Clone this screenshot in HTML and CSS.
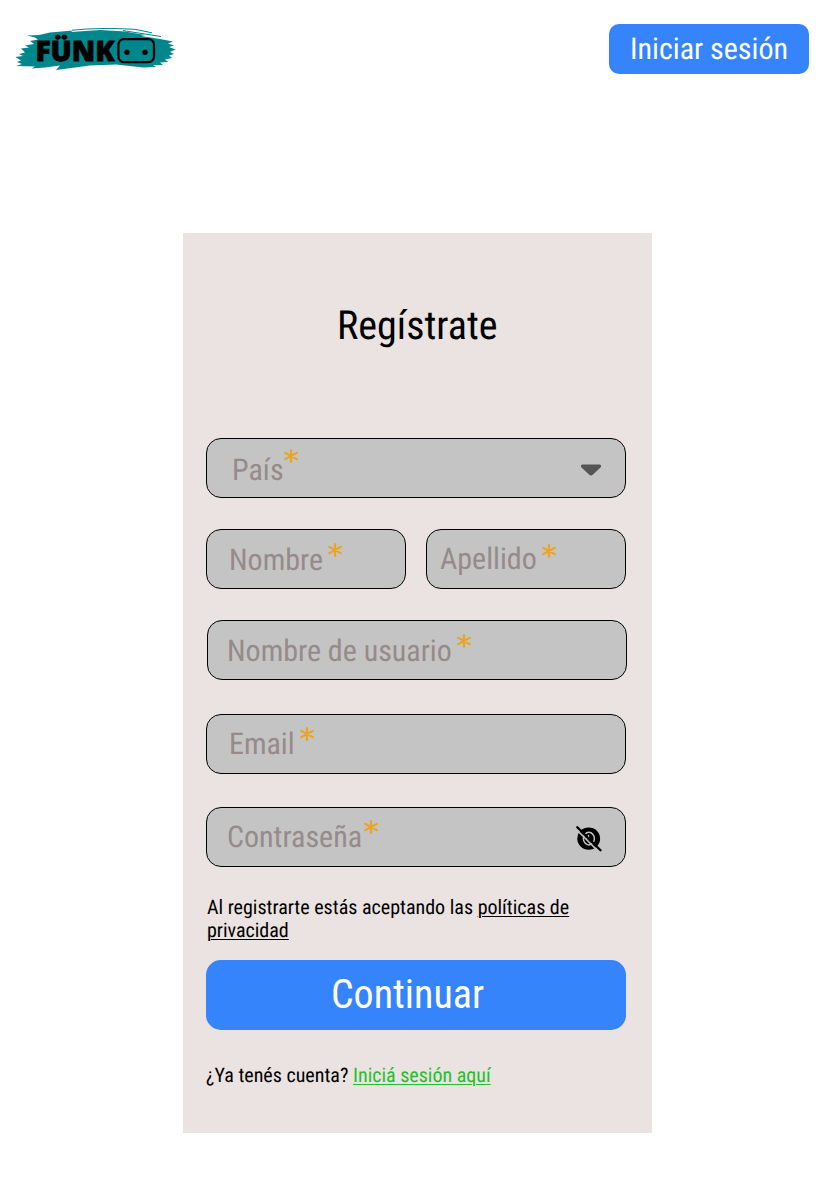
FILE: index.html
```html
<!DOCTYPE html>
<html lang="es">
<head>
<meta charset="utf-8">
<title>Regístrate</title>
<link rel="stylesheet" href="styles.css">
</head>
<body>
<svg width="0" height="0" class="defs"><symbol id="star" viewBox="0 0 14 14"><path d="M7 1.200V12.800M1.300 3.900L12.700 10.100M1.300 10.100L12.700 3.900"/></symbol></svg>
<header class="topbar">
  <svg class="logo" viewBox="0 0 162 46" role="img" aria-label="FÜNK">
    <path class="brush" d="M12 8.500L24 8 35 5.500 58 3.500 56 5 85 3 110 4.500 130 8 126 9 145 12 158 14.500 153 16.500 159 18.500 154 20 160.500 22.500 155 25 159 27 154 28.500 157 31 150 32.500 153 35 145 35.500 148 38 138 38 141 40 128 40.500 101 37.500 75 38.500 45 42.500 41 43 45 38.500 30 40.500 17 41.500 20 39.500 1 39 7 37 2 35 6 33.500 0.500 30 8 29 4 27 10 25.500 6 21.500 14 20.500 10 18.500 19 17 15 14 23 12.500 20 10.500Z"/>
    <path class="streaks" d="M57 3.200Q85 .3 120 2.300L137 5.800M108 3.600L146 9.500"/>
    <text class="logo-text" x="20.500" y="34" textLength="79" lengthAdjust="spacingAndGlyphs">FÜNK</text>
    <rect class="pad" x="103.400" y="12.200" width="35.600" height="22.900" rx="5.500"/>
    <circle cx="112" cy="25.300" r="2.700"/><circle cx="130" cy="25.300" r="2.700"/>
  </svg>
  <a class="login">Iniciar sesión</a>
</header>
<main class="card">
  <h1 class="title">Regístrate</h1>
  <div class="field country"><span>País</span><svg class="star"><use href="#star"/></svg>
    <svg class="arrow" viewBox="0 0 22 12"><path d="M2 .5H20Q22 1.500 20.500 3.500L13 10.500Q11 12.500 9 10.500L1.500 3.500Q0 1.500 2 .5Z"/></svg></div>
  <div class="names">
    <div class="field first"><span>Nombre</span><svg class="star"><use href="#star"/></svg></div>
    <div class="field last"><span>Apellido</span><svg class="star"><use href="#star"/></svg></div>
  </div>
  <div class="field user"><span>Nombre de usuario</span><svg class="star"><use href="#star"/></svg></div>
  <div class="field email"><span>Email</span><svg class="star"><use href="#star"/></svg></div>
  <div class="field password"><span>Contraseña</span><svg class="star"><use href="#star"/></svg>
    <svg class="eye" viewBox="0 0 26 26"><ellipse cx="12.700" cy="12.600" rx="11.400" ry="11.200"/><ellipse class="iris" cx="12.900" cy="12.600" rx="5.500" ry="6.300"/><path class="glint" d="M12.500 9.500Q12.800 11.500 11 12"/><path class="gap" d="M.5 3.500L22.500 25.500"/><path class="slash" d="M1.300 1.300L24.500 24.300"/></svg></div>
  <p class="terms">Al registrarte estás aceptando las <u>políticas de</u> <u>privacidad</u></p>
  <button class="submit">Continuar</button>
  <p class="account">¿Ya tenés cuenta? <a>Iniciá sesión aquí</a></p>
</main>
</body>
</html>
```
FILE: styles.css
```css
* { box-sizing: border-box; }
body { margin: 0; background: #fff; font-family: "Roboto Condensed", Roboto, sans-serif; font-stretch: condensed; color: #000; text-rendering: geometricPrecision; }
.defs { position: absolute; }
.topbar { display: flex; justify-content: space-between; padding: 24px 25px 0 15px; height: 233px; }
.logo { width: 162px; height: 46px; margin-top: 3px; }
.brush { fill: #00868b; }
.streaks { fill: none; stroke: #00868b; stroke-width: 1px; }
.logo-text { font: 800 28px "Open Sans", sans-serif; stroke: #000; stroke-width: 0.8px; }
.pad { fill: none; stroke: #000; stroke-width: 2.2px; }
.login { width: 200px; height: 50px; border-radius: 10px; background: #3584fc; color: #fff; font-size: 30px; line-height: 52px; text-align: center; }
.card { width: 469px; height: 900px; margin-left: 183px; padding: 69px 26px 0 23px; background: #ebe3e1; }
.title { margin: 0 0 89px; padding-left: 2.6px; font-size: 40px; line-height: 47px; font-weight: 400; text-align: center; }
.field { display: flex; width: 420px; height: 60px; padding-left: 22px; border: 1px solid #000; border-radius: 15px; background: #c4c4c4; color: #968a8a; font-size: 30px; line-height: 60px; }
.star { flex: none; width: 14px; height: 14px; margin: 12.5px 0 0 4.9px; fill: none; stroke: #e9a421; stroke-width: 2.2px; stroke-linecap: round; }
.country { padding-left: 25px; line-height: 63px; }
.country .star { margin: 9.5px 0 0 0.9px; }
.arrow { width: 22px; height: 12px; margin: 25px 23px 0 auto; fill: #555; }
.names { display: flex; gap: 20px; margin: 31px 0; }
.names .field { width: 200px; }
.names .first { line-height: 62px; }
.names .last { padding-left: 13px; }
.last .star { margin-top: 13.5px; }
.user { margin-left: 1px; padding-left: 19px; line-height: 62px; }
.email { margin: 34px 0 33px; }
.email .star { margin-top: 11.5px; }
.password { padding-left: 20px; }
.password .star { margin: 11.5px 0 0 1.8px; }
.eye { width: 26px; height: 26px; margin: 18px 23px 0 auto; fill: #000; }
.eye path { fill: none; stroke-linecap: round; }
.iris { stroke: #c4c4c4; stroke-width: 1.5px; }
.eye .glint { stroke: #c4c4c4; stroke-width: 1.5px; }
.eye .gap { stroke: #c4c4c4; stroke-width: 1.6px; }
.eye .slash { stroke: #000; stroke-width: 2.3px; }
.terms { margin: 29px 0 18px 1px; font-size: 20px; line-height: 23px; }
.terms u, .account a { text-decoration: underline; text-decoration-thickness: 1px; text-underline-offset: 2px; }
.submit { display: block; width: 420px; height: 70px; padding: 0 17px 1px 0; border: 0; border-radius: 15px; background: #3584fc; color: #fff; font: inherit; font-size: 40px; }
.account { margin: 34px 0 0; font-size: 20px; line-height: 23px; }
.account a { color: #22c02c; }
```
